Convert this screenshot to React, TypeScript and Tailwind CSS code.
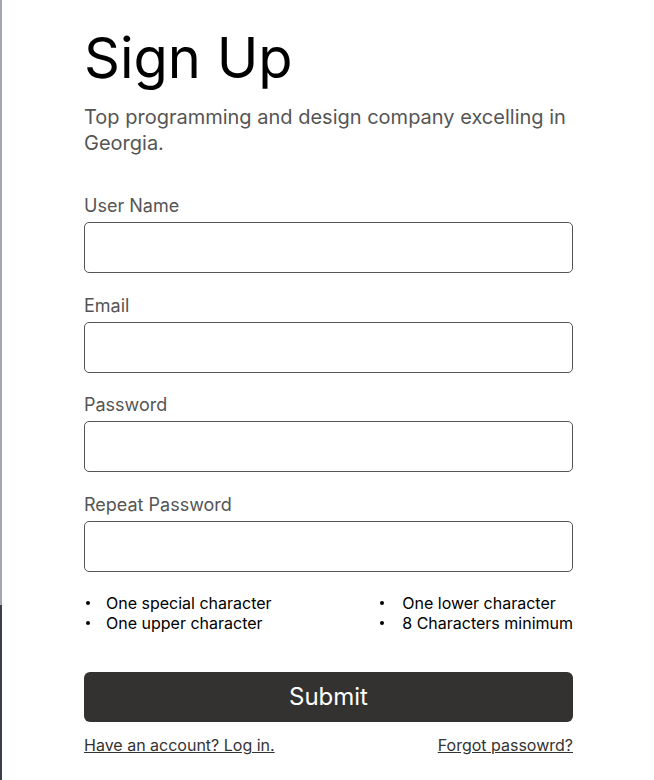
import React from "react";

const fields = ["User Name", "Email", "Password", "Repeat Password"];

function Rule({ children, gap }: { children: React.ReactNode; gap: string }) {
  return (
    <li className="flex items-center">
      <span
        className={`ml-[2px] h-[4px] w-[4px] shrink-0 rounded-full bg-black ${gap}`}
      />
      {children}
    </li>
  );
}

export default function App() {
  return (
    <div className="flex min-h-[780px] bg-white font-['Inter',sans-serif]">
      {/* background strip peeking at the left edge */}
      <div className="flex w-[2px] flex-col">
        <div className="h-[605px] bg-[#a3a8b0]" />
        <div className="flex-1 bg-[#3b4046]" />
      </div>

      <div className="ml-[82px] w-[489px] pt-[24px]">
        <h1 className="text-[56px] leading-[68px] text-black">Sign Up</h1>
        <p className="mt-[12px] text-[20px] leading-[26px] text-[#555555]">
          Top programming and design company excelling in Georgia.
        </p>

        <form className="mt-[39px]" onSubmit={(e) => e.preventDefault()}>
          {fields.map((f, i) => (
            <div key={f} className={i > 0 ? "mt-[21.7px]" : ""}>
              <label className="block text-[18px] leading-[22px] text-[#555555]">
                {f}
              </label>
              <input
                type={f.includes("Password") ? "password" : "text"}
                className="mt-[5px] block h-[51px] w-full rounded-[5px] border border-[#555555] px-3 outline-none"
              />
            </div>
          ))}

          <div className="mt-[21px] flex justify-between text-[16px] leading-[20px] text-black">
            <ul>
              <Rule gap="mr-[16px]">One special character</Rule>
              <Rule gap="mr-[16px]">One upper character</Rule>
            </ul>
            <ul>
              <Rule gap="mr-[18px]">One lower character</Rule>
              <Rule gap="mr-[18px]">8 Characters minimum</Rule>
            </ul>
          </div>

          <button
            type="submit"
            className="mt-[39px] h-[50px] w-full rounded-[6px] bg-[#343230] text-[24px] text-white"
          >
            Submit
          </button>

          <div className="mt-[13px] flex justify-between text-[16px] leading-[20px] text-[#333333]">
            <a href="#" className="underline">
              Have an account? Log in.
            </a>
            <a href="#" className="underline">
              Forgot passowrd?
            </a>
          </div>
        </form>
      </div>
    </div>
  );
}
